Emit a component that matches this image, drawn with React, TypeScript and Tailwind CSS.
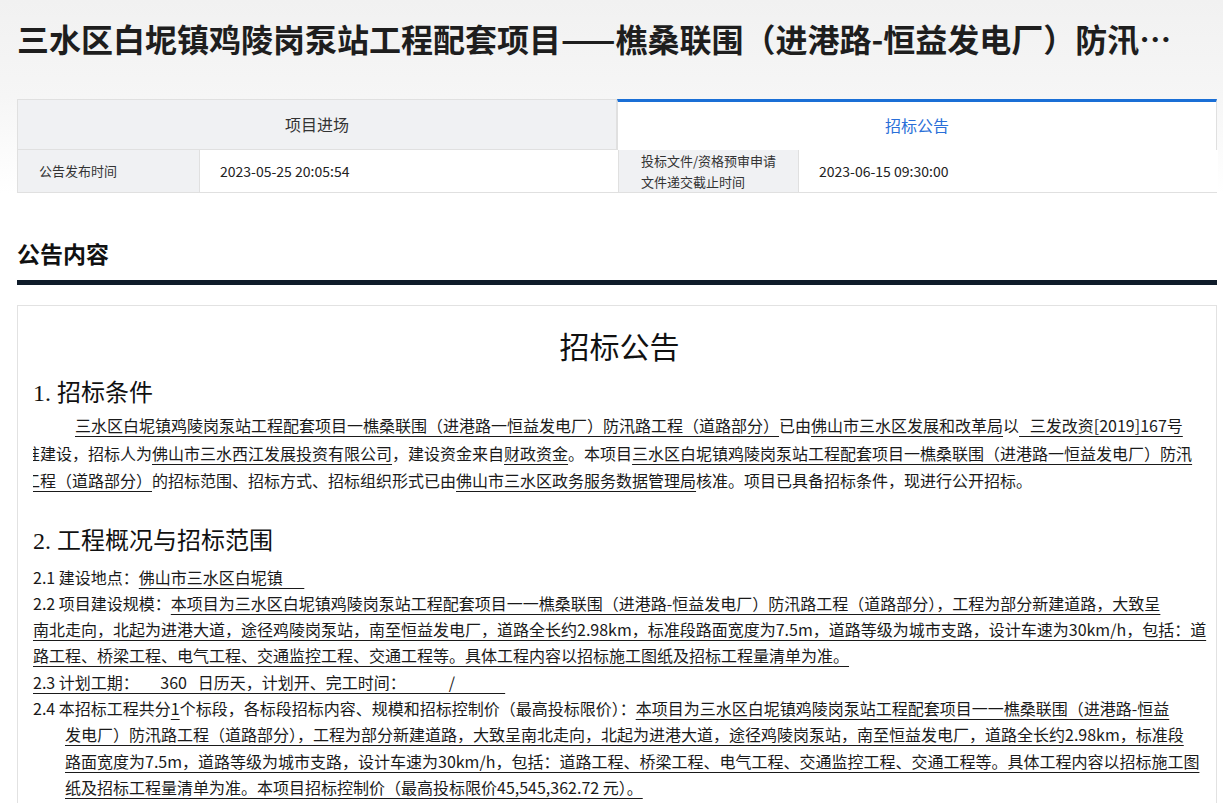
import React from "react";

const U = ({ children }: { children: React.ReactNode }) => (
  <span className="underline decoration-1 underline-offset-[4px]">{children}</span>
);

export default function App() {
  return (
    <div className="min-h-[803px] w-[1223px] bg-white font-['Noto_Sans_CJK_SC',sans-serif] text-[#222]">
      {/* header area with soft background */}
      <div className="bg-gradient-to-b from-[#f1f1f1] via-[#f6f6f6] to-white pb-0">
        <div className="pl-[17px] pt-[16px]">
          <h1 className="h-[44px] w-[1175px] overflow-hidden text-ellipsis whitespace-nowrap text-[32px] font-bold leading-[44px] text-[#1e1e1e]">
            三水区白坭镇鸡陵岗泵站工程配套项目——樵桑联围（进港路-恒益发电厂）防汛路工程（道路部分）招标公告
          </h1>
        </div>
        <div className="ml-[17px] mt-[39px] w-[1200px]">
          {/* tabs */}
          <div className="grid grid-cols-2">
            <div className="flex h-[51px] items-center justify-center border border-[#e0e0e0] bg-[#f0f1f3] pb-[2px] text-[16px] text-[#333]">
              项目进场
            </div>
            <div className="flex h-[51px] items-center justify-center border-x border-t-[3px] border-[#e0e0e0] border-t-[#1a6fd6] bg-white pb-[2px] text-[16px] text-[#2a6fd8]">
              招标公告
            </div>
          </div>
          {/* info row */}
          <div className="grid h-[43px] grid-cols-[181px_419px_180px_420px] border-x border-b border-[#e0e0e0]">
            <div className="flex items-center bg-[#f0f1f3] pl-[21px] text-[13px] text-[#333]">公告发布时间</div>
            <div className="flex items-center border-l border-[#e0e0e0] bg-white pl-[20px] text-[14px] text-[#222]">
              2023-05-25 20:05:54
            </div>
            <div className="flex flex-col justify-center border-l border-[#e0e0e0] bg-[#f0f1f3] pl-[22px] text-[13px] leading-[21px] text-[#333]">
              <span>投标文件/资格预审申请</span>
              <span>文件递交截止时间</span>
            </div>
            <div className="flex items-center border-l border-[#e0e0e0] bg-white pl-[20px] text-[14px] text-[#222]">
              2023-06-15 09:30:00
            </div>
          </div>
        </div>
      </div>

      <div className="ml-[17px] w-[1200px]">
        <h2 className="mt-[44px] h-[32px] text-[23px] font-bold leading-[32px] text-[#111]">公告内容</h2>
        <div className="mt-[11px] h-[5px] bg-[#0f1c2a]" />

        <div className="mt-[20px] min-h-[520px] border border-[#e2e2e2] bg-white pl-[15px] pr-[10px] text-[16px] text-[#1a1a1a]">
          <div className="mt-[22px] text-center font-['Liberation_Serif','Noto_Sans_CJK_SC',serif] text-[30px] leading-[40px] text-[#111]">
            招标公告
          </div>

          <div className="mt-[8px] h-[34px] font-['Liberation_Serif','Noto_Sans_CJK_SC',serif] text-[24px] leading-[34px] text-[#111]">
            1.&nbsp;招标条件
          </div>

          <div className="mt-[2px] overflow-hidden whitespace-pre leading-[27.5px]">
            <div className="pl-[42px]">
              <U>三水区白坭镇鸡陵岗泵站工程配套项目一樵桑联围（进港路一恒益发电厂）防汛路工程（道路部分）</U>已由<U>佛山市三水区发展和改革局</U>以<U>   三发改资[2019]167号</U>
            </div>
            <div className="-ml-[9px]">
              准建设，招标人为<U>佛山市三水西江发展投资有限公司</U>，建设资金来自<U>财政资金</U>。本项目<U>三水区白坭镇鸡陵岗泵站工程配套项目一樵桑联围（进港路一恒益发电厂）防汛</U>
            </div>
            <div className="-ml-[9px]">
              <U>工程（道路部分）</U>的招标范围、招标方式、招标组织形式已由<U>佛山市三水区政务服务数据管理局</U>核准。项目已具备招标条件，现进行公开招标。
            </div>
          </div>

          <div className="mt-[29px] h-[34px] font-['Liberation_Serif','Noto_Sans_CJK_SC',serif] text-[24px] leading-[34px] text-[#111]">
            2.&nbsp;工程概况与招标范围
          </div>

          <div className="mt-[6px] whitespace-pre leading-[26.3px]">
            <div>
              2.1 建设地点：<U>佛山市三水区白坭镇      </U>
            </div>
            <div>
              2.2 项目建设规模：<U>本项目为三水区白坭镇鸡陵岗泵站工程配套项目一一樵桑联围（进港路-恒益发电厂）防汛路工程（道路部分），工程为部分新建道路，大致呈</U>
            </div>
            <div>
              <U>南北走向，北起为进港大道，途径鸡陵岗泵站，南至恒益发电厂，道路全长约2.98km，标准段路面宽度为7.5m，道路等级为城市支路，设计车速为30km/h，包括：道</U>
            </div>
            <div>
              <U>路工程、桥梁工程、电气工程、交通监控工程、交通工程等。具体工程内容以招标施工图纸及招标工程量清单为准。</U>
            </div>
            <div>
              <U>2.3 计划工期：      360   日历天，计划开、完工时间：            /              </U>
            </div>
            <div>
              2.4 本招标工程共分<U>1</U>个标段，各标段招标内容、规模和招标控制价（最高投标限价）：<U>本项目为三水区白坭镇鸡陵岗泵站工程配套项目一一樵桑联围（进港路-恒益</U>
            </div>
            <div className="pl-[32px]">
              <U>发电厂）防汛路工程（道路部分），工程为部分新建道路，大致呈南北走向，北起为进港大道，途径鸡陵岗泵站，南至恒益发电厂，道路全长约2.98km，标准段</U>
            </div>
            <div className="pl-[32px]">
              <U>路面宽度为7.5m，道路等级为城市支路，设计车速为30km/h，包括：道路工程、桥梁工程、电气工程、交通监控工程、交通工程等。具体工程内容以招标施工图</U>
            </div>
            <div className="pl-[32px]">
              <U>纸及招标工程量清单为准。本项目招标控制价（最高投标限价45,545,362.72 元）。</U>
            </div>
          </div>
        </div>
      </div>
    </div>
  );
}
